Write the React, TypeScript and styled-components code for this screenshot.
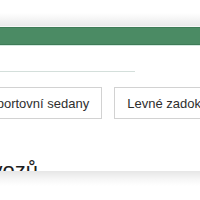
import React from "react"
import styled, { createGlobalStyle } from "styled-components"

const GlobalStyle = createGlobalStyle`
	html, body {
		margin: 0;
		padding: 0;
		background: #ffffff;
		overflow: hidden;
	}
	body {
		font-family: "Liberation Sans", Arial, sans-serif;
		color: #333333;
	}
`

const Page = styled.div`
	width: 200px;
	height: 200px;
	position: relative;
	overflow: hidden;
`

const TopShade = styled.div`
	height: 26px;
	background: linear-gradient(#ffffff 0, #ffffff 13px, #eaeaea 26px);
	border-bottom: 1px solid #f7f7f7;
`

const GreenBar = styled.div`
	height: 16px;
	background: #4b8b64;
	border-top: 1px solid #3f7b57;
	border-bottom: 1px solid #3f7b57;
	box-shadow: 0 1px 0 #d3e9df;
`

// the page is scrolled sideways, so the column starts left of the view
const Content = styled.div`
	margin-left: -25px;
	padding-top: 26px;
	display: flex;
	flex-direction: column;
`

const Divider = styled.div`
	width: 160px;
	height: 1px;
	background: #d4dfdb;
`

const ChipRow = styled.div`
	display: flex;
	gap: 12px;
	margin-top: 15px;
	white-space: nowrap;
`

const Chip = styled.div`
	flex: none;
	height: 30px;
	padding: 0 12px;
	display: flex;
	align-items: center;
	border: 1px solid #d2d2d2;
	background: #ffffff;
	font-size: 13px;
	color: #2e2e2e;
`

const Heading = styled.h2<{ $shift: number }>`
	margin: 39px 0 0 ${(p) => p.$shift}px;
	font-size: 22px;
	font-weight: normal;
	color: #1e1e1e;
	white-space: nowrap;
	line-height: 26px;
`

const BottomShade = styled.div`
	position: absolute;
	left: 0;
	right: 0;
	top: 171px;
	bottom: 0;
	background: linear-gradient(#e6e6e6 0, #f6f6f6 8px, #ffffff 15px);
`

const chips = ["Sportovní sedany", "Levné zadokolky"]

const App = () => (
	<Page>
		<GlobalStyle />
		<TopShade />
		<GreenBar />
		<Content>
			<Divider />
			<ChipRow>
				{chips.map((c) => (
					<Chip key={c}>{c}</Chip>
				))}
			</ChipRow>
			<Heading $shift={-36}>Typy vozů</Heading>
		</Content>
		<BottomShade />
	</Page>
)

export default App
